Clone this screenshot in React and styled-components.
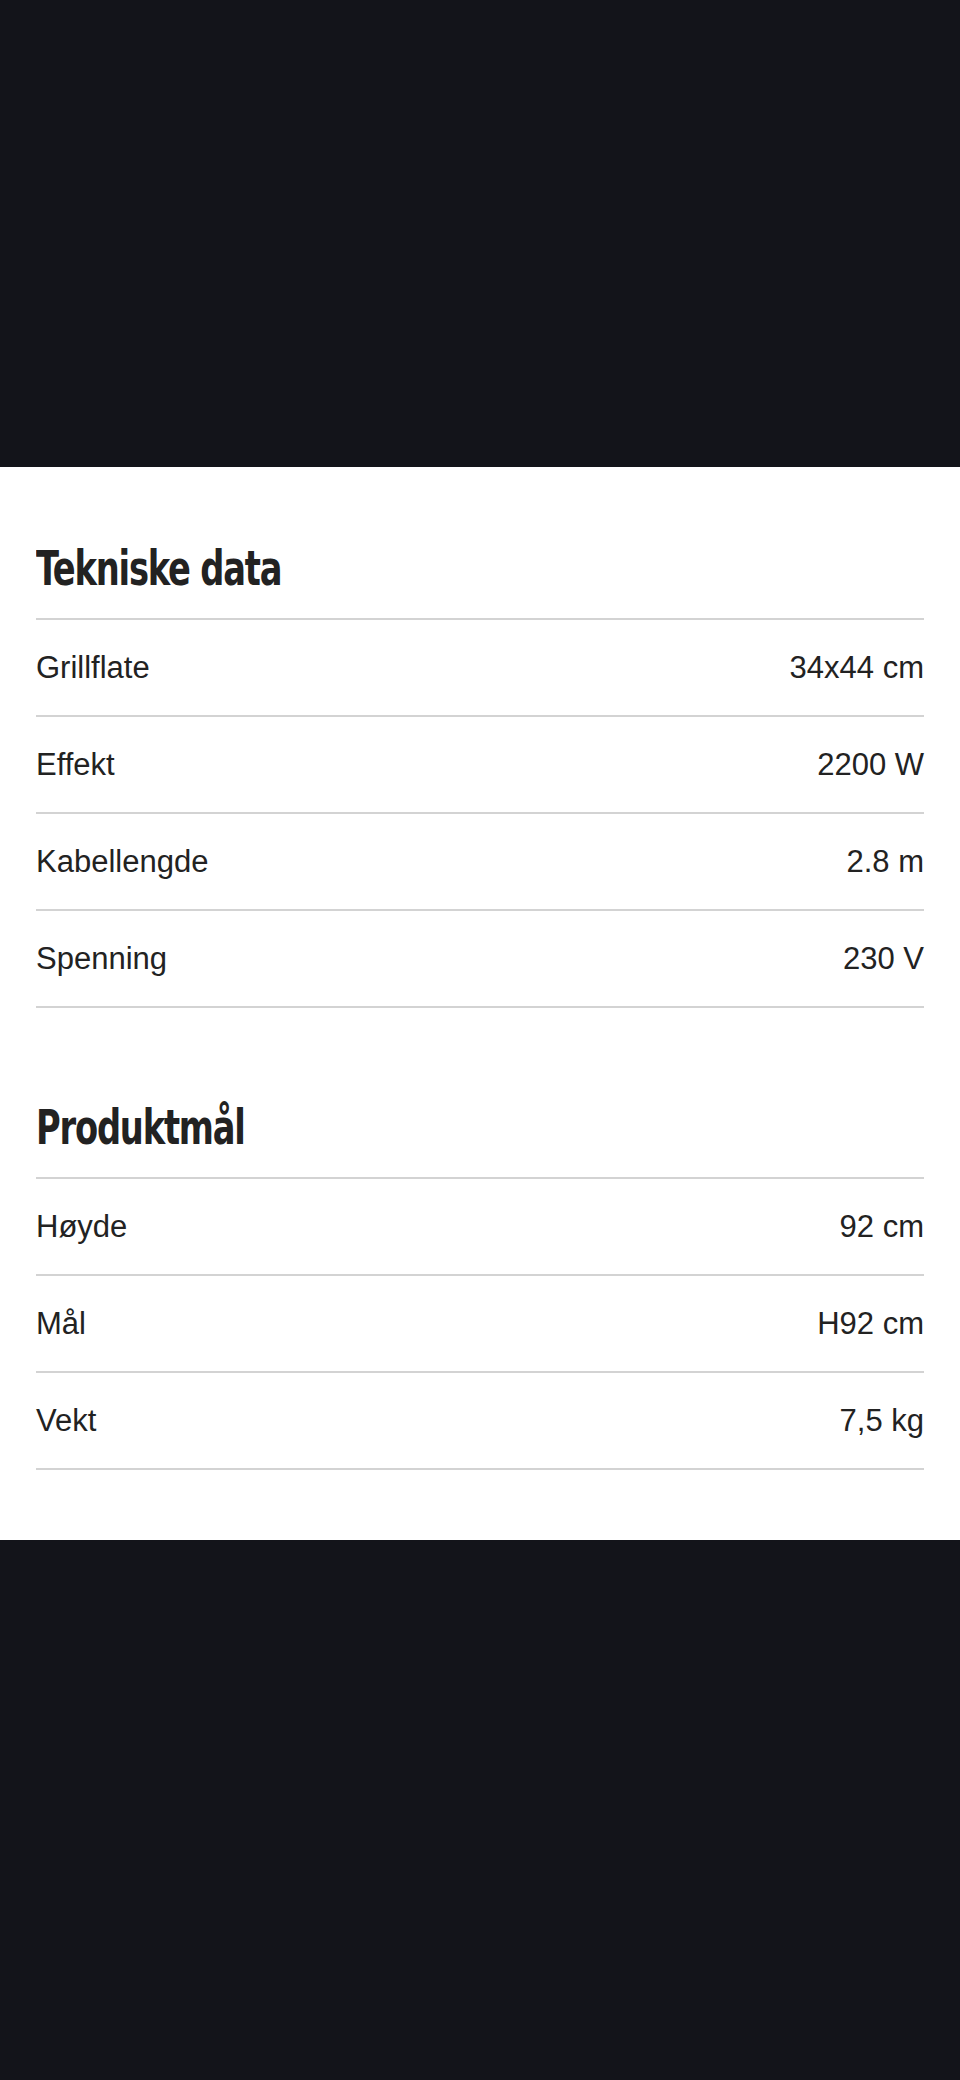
import styled, { createGlobalStyle } from 'styled-components'

const GlobalStyle = createGlobalStyle`
  html, body {
    margin: 0;
    padding: 0;
    background-color: #13141a;
  }
  body {
    font-family: "Liberation Sans", Arial, sans-serif;
  }
`

const SECTIONS = [
    {
        id: 1,
        title: "Tekniske data",
        rows: [
            { label: "Grillflate", value: "34x44 cm" },
            { label: "Effekt", value: "2200 W" },
            { label: "Kabellengde", value: "2.8 m" },
            { label: "Spenning", value: "230 V" },
        ]
    },
    {
        id: 2,
        title: "Produktmål",
        rows: [
            { label: "Høyde", value: "92 cm" },
            { label: "Mål", value: "H92 cm" },
            { label: "Vekt", value: "7,5 kg" },
        ]
    },
]

const App = () => {
    return <S.Page>
        <GlobalStyle />
        <S.Hero />
        <S.Panel>
            {SECTIONS.map((section) => <S.Section key={section.id}>
                <S.Title><S.TitleText>{section.title}</S.TitleText></S.Title>
                <S.List>
                    {section.rows.map((row) => <S.Row key={row.label}>
                        <S.Label>{row.label}</S.Label>
                        <S.Value>{row.value}</S.Value>
                    </S.Row>)}
                </S.List>
            </S.Section>)}
        </S.Panel>
    </S.Page>
}
export default App


const Page = styled.div`
    min-height: 2080px;
    display: flex;
    flex-direction: column;
    background-color: #13141a;
`

const Hero = styled.div`
    height: 467px;
    background-color: #13141a;
`

const Panel = styled.main`
    background-color: #ffffff;
    padding: 77px 36px 70px;
    display: flex;
    flex-direction: column;
    gap: 95px;
`

const Section = styled.section`
    display: flex;
    flex-direction: column;
`

const Title = styled.h2`
    margin: 0 0 26px;
    font-family: "DejaVu Sans", sans-serif;
    font-stretch: condensed;
    font-weight: bold;
    font-size: 48px;
    line-height: 48px;
    letter-spacing: -1.5px;
    color: #222222;
`

// the original face is a narrow grotesque; squeeze DejaVu to its width
const TitleText = styled.span`
    display: inline-block;
    transform: scaleX(0.78);
    transform-origin: left center;
    white-space: nowrap;
`

const List = styled.div`
    border-top: 2px solid #d3d3d3;
`

const Row = styled.div`
    height: 95px;
    display: flex;
    justify-content: space-between;
    align-items: center;
    border-bottom: 2px solid #d3d3d3;
    font-size: 31px;
    color: #222222;
`

const Label = styled.span``

const Value = styled.span`
    text-align: right;
`

const S = {
    Page,
    Hero,
    Panel,
    Section,
    Title,
    TitleText,
    List,
    Row,
    Label,
    Value
}
